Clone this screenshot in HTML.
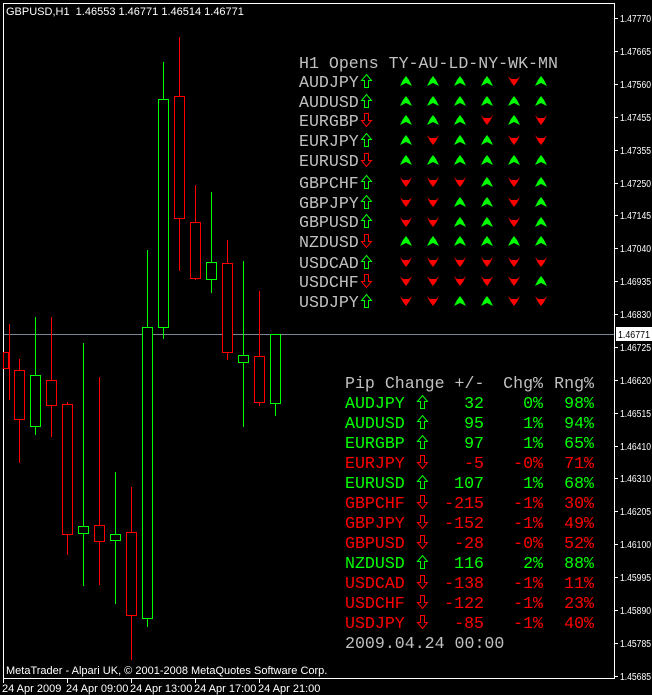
<!DOCTYPE html>
<html><head><meta charset="utf-8"><style>
html,body{margin:0;padding:0;background:#000;width:652px;height:695px;overflow:hidden}
svg{display:block}
.m{font-family:"Liberation Mono",monospace;font-size:16.6px}
.s{font-family:"Liberation Sans",sans-serif;font-size:11px;fill:#fff}
.p{font-family:"Liberation Sans",sans-serif;font-size:10px;fill:#fff}
</style></head><body>
<svg width="652" height="695" viewBox="0 0 652 695" xmlns="http://www.w3.org/2000/svg">
<defs>
<polygon id="gu" points="0,10 3,4 6,0 9,4 12,10 6,7" fill="#00ff00"/>
<polygon id="rd" points="0,0 3,3 6,3 9,3 12,0 9,6 6,10 3,6" fill="#ff0000"/>
<path id="hu" d="M0.5,6.5 L5.5,0.5 L10.5,6.5 L7.5,6.5 L7.5,13.5 L3.5,13.5 L3.5,6.5 Z" fill="none" stroke="#00ff00"/>
<path id="hd" d="M0.5,7.5 L5.5,13.5 L10.5,7.5 L7.5,7.5 L7.5,0.5 L3.5,0.5 L3.5,7.5 Z" fill="none" stroke="#ff0000"/>
</defs>
<rect width="652" height="695" fill="#000"/>
<path d="M3.5,3.5 H614.5 V678.5 H3.5 Z" fill="none" stroke="#fff"/>
<line x1="4" y1="334.5" x2="614" y2="334.5" stroke="#778899"/>
<g stroke-width="1" fill="none" shape-rendering="crispEdges">
<g stroke="#ff0000">
<line x1="9.5" y1="324" x2="9.5" y2="400"/><rect x="3.5" y="352.5" width="5" height="16"/>
<line x1="19.5" y1="359" x2="19.5" y2="463"/><rect x="14.5" y="370.5" width="10" height="49" fill="#000"/>
<line x1="51.5" y1="317" x2="51.5" y2="437"/><rect x="46.5" y="380.5" width="10" height="25" fill="#000"/>
<line x1="67.5" y1="402" x2="67.5" y2="555"/><rect x="62.5" y="404.5" width="10" height="130" fill="#000"/>
<line x1="99.5" y1="377" x2="99.5" y2="585"/><rect x="94.5" y="525.5" width="10" height="16" fill="#000"/>
<line x1="131.5" y1="487" x2="131.5" y2="660"/><rect x="126.5" y="532.5" width="10" height="83" fill="#000"/>
<line x1="179.5" y1="37" x2="179.5" y2="271"/><rect x="174.5" y="96.5" width="10" height="122" fill="#000"/>
<line x1="195.5" y1="185" x2="195.5" y2="280"/><rect x="190.5" y="222.5" width="10" height="56" fill="#000"/>
<line x1="227.5" y1="240" x2="227.5" y2="360"/><rect x="222.5" y="263.5" width="10" height="89" fill="#000"/>
<line x1="259.5" y1="291" x2="259.5" y2="406"/><rect x="254.5" y="356.5" width="10" height="46" fill="#000"/>
</g>
<g stroke="#00ff00">
<line x1="35.5" y1="317" x2="35.5" y2="435"/><rect x="30.5" y="375.5" width="10" height="51" fill="#000"/>
<line x1="83.5" y1="343" x2="83.5" y2="586"/><rect x="78.5" y="526.5" width="10" height="7" fill="#000"/>
<line x1="115.5" y1="472" x2="115.5" y2="604"/><rect x="110.5" y="534.5" width="10" height="6" fill="#000"/>
<line x1="147.5" y1="250" x2="147.5" y2="627"/><rect x="142.5" y="327.5" width="10" height="291" fill="#000"/>
<line x1="163.5" y1="62" x2="163.5" y2="339"/><rect x="158.5" y="99.5" width="10" height="228" fill="#000"/>
<line x1="211.5" y1="192" x2="211.5" y2="293"/><rect x="206.5" y="262.5" width="10" height="17" fill="#000"/>
<line x1="243.5" y1="261" x2="243.5" y2="427"/><rect x="238.5" y="355.5" width="10" height="7" fill="#000"/>
<line x1="275.5" y1="334" x2="275.5" y2="416"/><rect x="270.5" y="334.5" width="10" height="69" fill="#000"/>
</g>
<g stroke="#fff">
<line x1="614" y1="18.5" x2="618" y2="18.5"/><line x1="614" y1="51.5" x2="618" y2="51.5"/><line x1="614" y1="84.5" x2="618" y2="84.5"/><line x1="614" y1="117.5" x2="618" y2="117.5"/><line x1="614" y1="150.5" x2="618" y2="150.5"/><line x1="614" y1="183.5" x2="618" y2="183.5"/><line x1="614" y1="215.5" x2="618" y2="215.5"/><line x1="614" y1="248.5" x2="618" y2="248.5"/><line x1="614" y1="281.5" x2="618" y2="281.5"/><line x1="614" y1="314.5" x2="618" y2="314.5"/><line x1="614" y1="347.5" x2="618" y2="347.5"/><line x1="614" y1="380.5" x2="618" y2="380.5"/><line x1="614" y1="413.5" x2="618" y2="413.5"/><line x1="614" y1="446.5" x2="618" y2="446.5"/><line x1="614" y1="478.5" x2="618" y2="478.5"/><line x1="614" y1="511.5" x2="618" y2="511.5"/><line x1="614" y1="544.5" x2="618" y2="544.5"/><line x1="614" y1="577.5" x2="618" y2="577.5"/><line x1="614" y1="610.5" x2="618" y2="610.5"/><line x1="614" y1="643.5" x2="618" y2="643.5"/><line x1="614" y1="676.5" x2="618" y2="676.5"/>
<line x1="3.5" y1="678" x2="3.5" y2="683"/><line x1="67.5" y1="678" x2="67.5" y2="683"/><line x1="131.5" y1="678" x2="131.5" y2="683"/><line x1="195.5" y1="678" x2="195.5" y2="683"/><line x1="259.5" y1="678" x2="259.5" y2="683"/>
</g>
</g>
<rect x="616" y="327" width="36" height="14" fill="#fff"/>
<g class="s">
<text x="6" y="15">GBPUSD,H1&#160; 1.46553 1.46771 1.46514 1.46771</text>
<text x="6" y="674">MetaTrader - Alpari UK, © 2001-2008 MetaQuotes Software Corp.</text>
<text x="2" y="692">24 Apr 2009</text><text x="66" y="692">24 Apr 09:00</text><text x="130" y="692">24 Apr 13:00</text><text x="194" y="692">24 Apr 17:00</text><text x="258" y="692">24 Apr 21:00</text>
</g>
<g class="p" id="px"></g>
<g class="m" fill="#c0c0c0">
<text x="299" y="68">H1 Opens TY-AU-LD-NY-WK-MN</text>
<text x="299" y="87">AUDJPY</text><text x="299" y="107">AUDUSD</text><text x="299" y="126">EURGBP</text><text x="299" y="146">EURJPY</text><text x="299" y="166">EURUSD</text><text x="299" y="188">GBPCHF</text><text x="299" y="208">GBPJPY</text><text x="299" y="227">GBPUSD</text><text x="299" y="247">NZDUSD</text><text x="299" y="268">USDCAD</text><text x="299" y="287">USDCHF</text><text x="299" y="307">USDJPY</text>
</g>
<g>
<use href="#hu" x="361" y="74"/><use href="#hu" x="361" y="94"/><use href="#hd" x="361" y="113"/><use href="#hu" x="361" y="133"/><use href="#hd" x="361" y="153"/><use href="#hu" x="361" y="175"/><use href="#hu" x="361" y="195"/><use href="#hu" x="361" y="214"/><use href="#hd" x="361" y="234"/><use href="#hu" x="361" y="255"/><use href="#hd" x="361" y="274"/><use href="#hu" x="361" y="294"/>
</g>
<g id="rows"></g>
<g class="m">
<text x="345" y="388" fill="#c0c0c0">Pip Change +/-</text>
<text x="543" y="388" fill="#c0c0c0" text-anchor="end">Chg%</text>
<text x="594" y="388" fill="#c0c0c0" text-anchor="end">Rng%</text>
<text x="345" y="648" fill="#c0c0c0">2009.04.24 00:00</text>
</g>
<g id="low"></g>
<script>
var ns="http://www.w3.org/2000/svg";
var P=document.getElementById("px");
[["1.47770",18],["1.47665",51],["1.47560",84],["1.47455",117],["1.47355",150],["1.47250",183],["1.47145",215],["1.47040",248],["1.46935",281],["1.46830",314],["1.46725",347],["1.46620",380],["1.46515",413],["1.46410",446],["1.46310",478],["1.46205",511],["1.46100",544],["1.45995",577],["1.45890",610],["1.45785",643],["1.45685",676]].forEach(function(a){var e=document.createElementNS(ns,"text");e.setAttribute("x",620);e.setAttribute("y",a[1]+4);e.setAttribute("textLength",31);e.setAttribute("lengthAdjust","spacingAndGlyphs");e.textContent=a[0];P.appendChild(e);});
var e=document.createElementNS(ns,"text");e.setAttribute("x",618);e.setAttribute("y",338);e.setAttribute("textLength",32);e.setAttribute("lengthAdjust","spacingAndGlyphs");e.setAttribute("style","fill:#000");e.textContent="1.46771";P.appendChild(e);
var up=[["GGGGRG",81],["GGGGGG",101],["GGGRGR",120],["GRGGRR",140],["GGGGGG",160],["RRRGRG",182],["RRGGRG",202],["RRGGRG",222],["GGGGGG",241],["RRRRRR",262],["RRRRRG",281],["RRGGRR",301]];
var cx=[406,433,460,487,514,541],g=document.getElementById("rows");
up.forEach(function(r){for(var i=0;i<6;i++){var u=document.createElementNS(ns,"use");u.setAttribute("href",r[0][i]=="G"?"#gu":"#rd");u.setAttribute("x",cx[i]-6);u.setAttribute("y",r[1]-5);g.appendChild(u);}});
var lo=[["AUDJPY",1,"32","0%","98%"],["AUDUSD",1,"95","1%","94%"],["EURGBP",1,"97","1%","65%"],["EURJPY",0,"-5","-0%","71%"],["EURUSD",1,"107","1%","68%"],["GBPCHF",0,"-215","-1%","30%"],["GBPJPY",0,"-152","-1%","49%"],["GBPUSD",0,"-28","-0%","52%"],["NZDUSD",1,"116","2%","88%"],["USDCAD",0,"-138","-1%","11%"],["USDCHF",0,"-122","-1%","23%"],["USDJPY",0,"-85","-1%","40%"]];
var L=document.getElementById("low");
lo.forEach(function(r,i){var y=408+i*20,c=r[1]?"#00ff00":"#ff0000";
function t(s,x,a){var e=document.createElementNS(ns,"text");e.setAttribute("class","m");e.setAttribute("x",x);e.setAttribute("y",y);e.setAttribute("fill",c);if(a)e.setAttribute("text-anchor","end");e.textContent=s;L.appendChild(e);}
t(r[0],345);t(r[2],484,1);t(r[3],543,1);t(r[4],594,1);
var u=document.createElementNS(ns,"use");u.setAttribute("href",r[1]?"#hu":"#hd");u.setAttribute("x",417);u.setAttribute("y",y-13);L.appendChild(u);});
</script>
</svg>
</body></html>
